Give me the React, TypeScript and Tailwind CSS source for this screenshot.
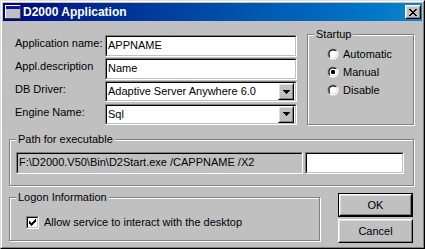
import React from 'react';

const face = 'bg-[#c0c0c0]';

const Sunken = ({ className = '', inner = 'bg-white', children }: { className?: string; inner?: string; children?: React.ReactNode }) => (
  <div className={`border border-t-[#808080] border-l-[#808080] border-b-white border-r-white ${className}`}>
    <div className={`h-full border border-t-black border-l-black border-b-[#c0c0c0] border-r-[#c0c0c0] ${inner}`}>{children}</div>
  </div>
);

const Raised = ({ className = '', children }: { className?: string; children?: React.ReactNode }) => (
  <div className={`border border-t-white border-l-white border-b-black border-r-black ${className}`}>
    <div className="h-full border border-t-[#dfdfdf] border-l-[#dfdfdf] border-b-[#808080] border-r-[#808080] bg-[#c0c0c0] flex items-center justify-center">
      {children}
    </div>
  </div>
);

const Group = ({ title, className = '', children }: { title: string; className?: string; children?: React.ReactNode }) => (
  <fieldset className={`border border-[#808080] shadow-[inset_1px_1px_0_#fff,1px_1px_0_#fff] ${className}`}>
    <legend className="ml-[6px] px-[2px] leading-[13px] bg-[#c0c0c0]">{title}</legend>
    {children}
  </fieldset>
);

const Arrow = () => (
  <svg width="7" height="4" viewBox="0 0 7 4">
    <path d="M0 0h7v1H0zM1 1h5v1H1zM2 2h3v1H2zM3 3h1v1H3z" fill="#000" />
  </svg>
);

const Radio = ({ checked }: { checked?: boolean }) => (
  <svg width="12" height="12" viewBox="0 0 12 12" className="shrink-0">
    <defs>
      <linearGradient id="ro" x1="0" y1="0" x2="1" y2="1">
        <stop offset="0.5" stopColor="#808080" />
        <stop offset="0.5" stopColor="#ffffff" />
      </linearGradient>
      <linearGradient id="ri" x1="0" y1="0" x2="1" y2="1">
        <stop offset="0.5" stopColor="#000000" />
        <stop offset="0.5" stopColor="#dfdfdf" />
      </linearGradient>
    </defs>
    <circle cx="6" cy="6" r="5.5" fill="url(#ro)" />
    <circle cx="6" cy="6" r="4.5" fill="url(#ri)" />
    <circle cx="6" cy="6" r="3.5" fill="#fff" />
    {checked && <rect x="4" y="4" width="4" height="4" rx="1.2" fill="#000" />}
  </svg>
);

const Check = () => (
  <svg width="7" height="7" viewBox="0 0 7 7">
    <path d="M6 0h1v1H6zM5 1h2v1H5zM0 2h1v1H0zM4 2h3v1H4zM0 3h2v1H0zM3 3h3v1H3zM0 4h5v1H0zM1 5h3v1H1zM2 6h1v1H2z" fill="#000" />
  </svg>
);

const fields = [
  { label: 'Application name:', value: 'APPNAME', combo: false },
  { label: 'Appl.description', value: 'Name', combo: false },
  { label: 'DB Driver:', value: 'Adaptive Server Anywhere 6.0', combo: true },
  { label: 'Engine Name:', value: 'Sql', combo: true },
];

export default function App() {
  return (
    <div className="w-[425px] h-[249px] border border-t-[#dfdfdf] border-l-[#dfdfdf] border-b-black border-r-black font-['Liberation_Sans',Arial,sans-serif] text-[11px] text-black select-none">
      <div className={`h-full border border-t-white border-l-white border-b-[#808080] border-r-[#808080] p-[1px] ${face}`}>
        {/* title bar */}
        <div className="h-[18px] flex items-center bg-linear-to-r from-[#000080] to-[#1084d0] pl-[2px] pr-[1px]">
          <svg width="16" height="14" viewBox="0 0 16 14" className="shrink-0">
            <rect x="0" y="0" width="16" height="14" fill="#404040" />
            <rect x="0" y="0" width="15" height="13" fill="#fff" />
            <rect x="1" y="1" width="14" height="12" fill="#c0c0c0" />
            <rect x="1" y="1" width="14" height="3" fill="#1010b0" />
          </svg>
          <span className="ml-[2px] text-white font-bold text-[12px] leading-none">D2000 Application</span>
          <Raised className="ml-auto w-[16px] h-[14px]">
            <svg width="8" height="7" viewBox="0 0 8 7">
              <path d="M0 0h2v1H0zM6 0h2v1H6zM1 1h2v1H1zM5 1h2v1H5zM2 2h4v1H2zM3 3h2v1H3zM2 4h4v1H2zM1 5h2v1H1zM5 5h2v1H5zM0 6h2v1H0zM6 6h2v1H6z" fill="#000" />
            </svg>
          </Raised>
        </div>

        {/* body */}
        <div className="pl-[6px] pr-[8px] pt-[7px]">
          <div className="flex justify-between">
            <div className="pl-[6px] pt-[7px] flex flex-col gap-[1px]">
              {fields.map((f) => (
                <div key={f.label} className="flex items-center">
                  <span className="w-[90px] pb-[5px] whitespace-nowrap">{f.label}</span>
                  <Sunken className={`w-[192px] ${f.combo ? 'h-[21px]' : 'h-[22px]'}`} inner="bg-white flex items-center pl-[1px] pr-[1px]">
                    <span className="flex-1 whitespace-nowrap pb-[1px]">{f.value}</span>
                    {f.combo && (
                      <Raised className="w-[16px] h-[17px]">
                        <Arrow />
                      </Raised>
                    )}
                  </Sunken>
                </div>
              ))}
            </div>
            <Group title="Startup" className="w-[107px] h-[97px]">
              <div className="pl-[19px] pt-[4px] flex flex-col">
                {['Automatic', 'Manual', 'Disable'].map((r) => (
                  <div key={r} className="h-[18px] flex items-center gap-[4px]">
                    <Radio checked={r === 'Manual'} />
                    <span>{r}</span>
                  </div>
                ))}
              </div>
            </Group>
          </div>

          <Group title="Path for executable" className="mt-[8px] h-[53px]">
            <div className="pl-[6px] pt-[6px] flex gap-[2px]">
              <Sunken className="w-[287px] h-[22px]" inner="bg-[#c0c0c0] flex items-center pl-[1px]">
                <span className="whitespace-nowrap pb-[1px]">F:\D2000.V50\Bin\D2Start.exe /CAPPNAME /X2</span>
              </Sunken>
              <Sunken className="w-[99px] h-[22px]" />
            </div>
          </Group>

          <div className="mt-[5px] flex justify-between items-start">
            <Group title="Logon Information" className="w-[311px] h-[50px]">
              <div className="pl-[16px] pt-[11px] h-[26px] flex items-center gap-[5px]">
                <Sunken className="w-[13px] h-[13px] shrink-0" inner="bg-white flex items-center justify-center">
                  <Check />
                </Sunken>
                <span className="whitespace-nowrap">Allow service to interact with the desktop</span>
              </div>
            </Group>
            <div className="mt-[2px] flex flex-col gap-[2px] mr-[1px]">
              <div className="border border-black w-[75px] h-[24px]">
                <Raised className="h-full">OK</Raised>
              </div>
              <Raised className="w-[75px] h-[24px]">Cancel</Raised>
            </div>
          </div>
        </div>
      </div>
    </div>
  );
}
